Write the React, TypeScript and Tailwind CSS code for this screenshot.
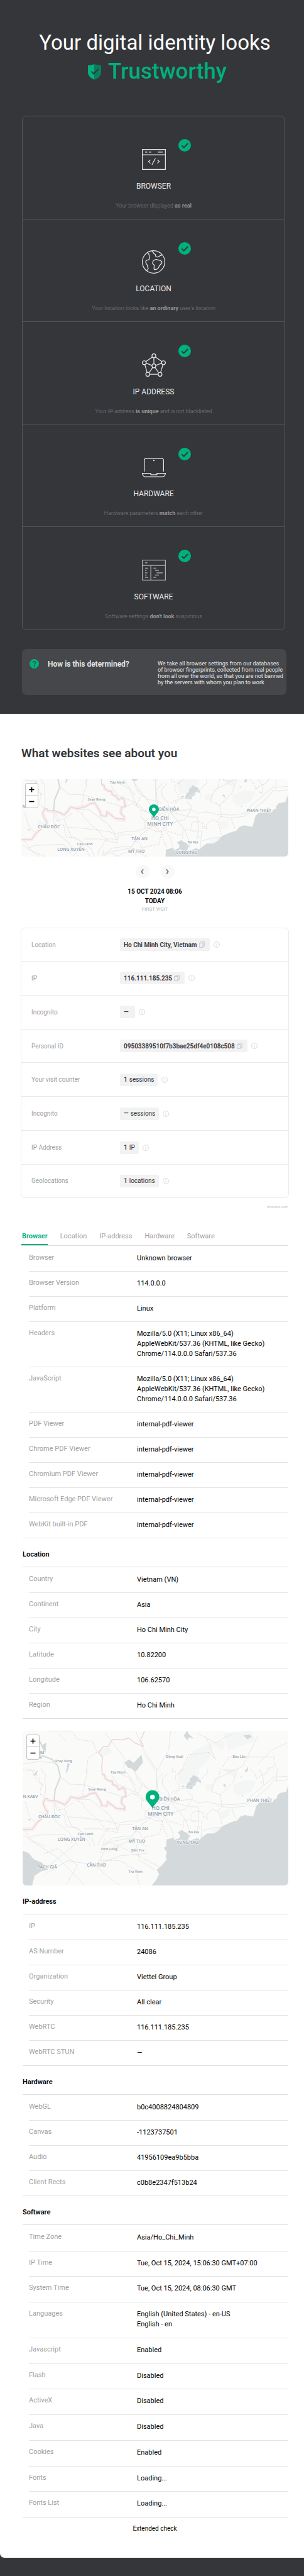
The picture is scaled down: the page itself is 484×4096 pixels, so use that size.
import React from "react";

const sans = "font-['Roboto','Liberation_Sans',sans-serif]";

/* ---------- status icons ---------- */

function BrowserIcon() {
  return (
    <svg viewBox="0 0 62 54" className="h-[33px] w-[38px]" fill="none" stroke="#e9e9ea" strokeWidth="2" aria-hidden="true">
      <rect x="1" y="1" width="60" height="52" />
      <path d="M1 15H61M8 8h6M18 8h6M41 8h13" />
      <path d="M22 28l-5 4.500 5 4.500M40 28l5 4.500-5 4.500M35 24l-9 17" />
    </svg>
  );
}

function GlobeIcon() {
  return (
    <svg viewBox="0 0 60 60" className="size-[37px]" fill="none" stroke="#e9e9ea" strokeWidth="2" strokeLinejoin="round" aria-hidden="true">
      <circle cx="30" cy="30" r="29" />
      <path d="M15 6c4 4 4 8 4 10 1 5 2 6-2 8-6 2-8 3-7 7 1 6 4 5 4 9 1 6 4 6 1 10-3 2-4 1-5 3" />
      <path d="M26 2c1 4 4 2 5 7 3 2 3 0 4 3 0 5 3 6 7 5 3-2 5-4 11-5" />
      <path d="M28 35c-2-7 4-12 11-11 3 2 6 1 9 3 5 1 4 5 2 8-3 2-5 3-6 7-2 5-5 7-8 7-5 2-5 0-5-3 1-6 2-8-3-11z" />
    </svg>
  );
}

function NetworkIcon() {
  return (
    <svg viewBox="0 0 62 60" className="h-[37px] w-[38px]" fill="none" stroke="#e9e9ea" strokeWidth="2" aria-hidden="true">
      <circle cx="31" cy="6" r="5" />
      <circle cx="6" cy="24" r="5" />
      <circle cx="56" cy="24" r="5" />
      <circle cx="15" cy="54" r="5" />
      <circle cx="47" cy="54" r="5" />
      <circle cx="31" cy="32" r="5" />
      <path d="M27 9L10 21M35 9l17 12M31 11v16M11 25l15 6M51 25l-15 6M7.500 29l6 20M54.500 29l-6 20M20 54h22M28 36L18.500 50M34 36l9.500 14" />
    </svg>
  );
}

function LaptopIcon() {
  return (
    <svg viewBox="0 0 62 50" className="h-[31px] w-[38px]" fill="none" stroke="#e9e9ea" strokeWidth="2" aria-hidden="true">
      <path d="M6 35V6q0-5 5-5H51q5 0 5 5V35" />
      <path d="M1 40H23v3.500H39V40H61q-1 9-10 9H11Q2 49 1 40z" />
      <circle cx="31" cy="6.500" r=".8" fill="#e9e9ea" />
    </svg>
  );
}

function SoftwareIcon() {
  return (
    <svg viewBox="0 0 62 54" className="h-[33px] w-[38px]" fill="none" stroke="#b3b3b5" strokeWidth="2" aria-hidden="true">
      <rect x="1" y="1" width="60" height="52" />
      <path d="M1 15H61M23 15V53M8 8h6M8 22h8M8 28h4M8 34h6M8 40h4M8 46h8M30 22h7M34 28h10M38 34h16M34 40h10M30 46h7" />
    </svg>
  );
}

function CheckBadge() {
  return (
    <svg viewBox="0 0 32 32" className="absolute top-9 left-1/2 ml-[39px] size-5" aria-hidden="true">
      <circle cx="16" cy="16" r="16" fill="#00b07d" />
      <path d="M9.500 17.500l4.500 4.300 9.500-9.800" fill="none" stroke="#35363a" strokeWidth="3.200" strokeLinecap="round" strokeLinejoin="round" />
    </svg>
  );
}

function ShieldIcon() {
  return (
    <svg viewBox="0 0 34 40" className="h-[25px] w-[21px]" aria-hidden="true">
      <path d="M17 0L0 3v17c0 10 7 16 17 20z" fill="#00b07d" />
      <path d="M17 0l17 3v17c0 10-7 16-17 20z" fill="#087f5d" />
      <path d="M10 19.500l5 5L26 13" fill="none" stroke="#35363a" strokeWidth="3.400" strokeLinecap="round" />
    </svg>
  );
}

const checks = [
  { title: "BROWSER", box: "h-[38px]", icon: <BrowserIcon />, text: ["Your browser displayed ", "as real", ""] },
  { title: "LOCATION", box: "h-[37px]", icon: <GlobeIcon />, text: ["Your location looks like ", "an ordinary", " user's location"] },
  { title: "IP ADDRESS", box: "h-[38px]", icon: <NetworkIcon />, text: ["Your IP-address ", "is unique", " and is not blacklisted"] },
  { title: "HARDWARE", box: "h-[36px]", icon: <LaptopIcon />, text: ["Hardware parameters ", "match", " each other"] },
  { title: "SOFTWARE", box: "h-[38px]", icon: <SoftwareIcon />, text: ["Software settings ", "don't look", " suspicious"] },
];

/* ---------- map ---------- */

type Label = [string, number, number, number];

const places: Label[] = [
  ["PHNOM", 35, -39, 12],
  ["PENH", 35, -26, 12],
  ["Prey Veng", 108, -18, 9],
  ["Đồng Xoài", 394, -28, 9],
  ["Bảo Lộc", 560, -29, 9],
  ["Tây Ninh", 248, 12, 9],
  ["Svay Rieng", 194, 56, 9],
  ["N KAEV", 22, 75, 11],
  ["CHÂU ĐỐC", 71, 127, 11],
  ["Cao Lãnh", 164, 170, 9],
  ["LONG XUYÊN", 128, 185, 11],
  ["TÂN AN", 305, 158, 11],
  ["MỸ THO", 297, 190, 11],
  ["BIÊN HÒA", 381, 81, 11],
  ["HO CHI", 358, 106, 13],
  ["MINH CITY", 358, 120, 13],
  ["PHAN THIẾT", 613, 85, 11],
  ["Bà Rịa", 443, 165, 9],
  ["VŨNG TÀU", 427, 193, 11],
  ["Vĩnh Long", 225, 210, 9],
  ["Bến Tre", 299, 212, 9],
  ["RẠCH GIÁ", 65, 256, 11],
  ["CẦN THƠ", 192, 252, 11],
  ["Trà Vinh", 293, 268, 9],
];

const west = "translate(-5 -9) scale(.3333)";
const east = "translate(345 -9) scale(.3333)";
const full = "matrix(.5006 0 0 .6059 -57 -612.3)";

function Lines({ d, transform }: { d: string; transform: string }) {
  return <path d={d} transform={transform} vectorEffect="non-scaling-stroke" />;
}

type MapProps = { left: number; top: number; width: number; tall: number; height: string; pin: string; name: string };

function MapView({ left, top, width, tall, height, pin, name }: MapProps) {
  const visible = places.filter(([, , y, size]) => y - size >= top - 1 && y < top + tall - 4);
  return (
    <div className={`relative overflow-hidden rounded-md bg-[#fafaf8] ${height}`}>
      <svg viewBox={`${left} ${top} ${width} ${tall}`} preserveAspectRatio="xMidYMid slice" className="block size-full" role="img" aria-label={name}>
        <g fill="#f3f6f4">
          <path transform={east} d="M165 60L215 30 330 20 340 60 240 150 190 140zM600 150L700 110 780 125 740 200 700 215 640 235 595 190zM385 150L450 140 440 190 390 195zM490 360L560 345 570 390 510 420zM520 30L640 30 620 90 560 70zM430 490L520 475 480 510 440 520z" />
          <path transform={full} d="M940 1005L1000 930 1100 900 1080 970 1000 1030zM1150 860L1290 850 1320 890 1180 930zM1080 900L1160 890 1150 930zM505 935L560 915 580 940 520 960zM200 1190L235 1190 232 1220 205 1220z" />
        </g>
        <g fill="#d4dadc">
          <path d="M690 39L685 48 681 59 665 62 658 69 657 76 650 79 647 86 635 85 612 87 604 96 600 111 597 121 594 123 575 119 563 123 555 133 538 138 517 147 507 159 495 166 478 166 467 174 458 182 452 178 438 183 427 184 433 173 425 164 417 161 413 157 402 163 408 171 407 178 393 183 391 177 373 182 372 200 366 203 374 215 371 227 374 233 361 248 348 260 354 272 346 287 333 302H692z" />
          <path d="M0 210L18 217 31 233 51 241 68 260 51 263 33 275 26 302H0z" />
          <path transform={east} d="M240 150L250 132 262 130 265 100 280 92 290 72 300 80 308 84 330 90 332 102 350 120 355 178 349 135 325 125 312 132 310 150 285 165 285 185 245 180 232 172zM195 168L215 153 228 165 205 170zM518 155L535 142 546 175 530 160zM690 35L712 30 705 50 695 55zM652 95L668 78 662 96zM390 405L403 385 397 400 405 420zM288 428L296 435 304 432 297 440zM555 336L575 346 570 348zM810 122L828 130 815 135zM664 236L678 228 672 245zM335 478L345 468 341 480z" />
          <path transform={full} d="M642 985L665 970 690 985 730 950 738 985 720 1000 710 1015 695 1022 680 1010 660 1005zM948 870L965 848 972 862 1002 882 975 876 966 890zM1255 868L1290 866 1298 874 1275 885zM1262 1020L1280 1000 1276 1022zM215 910L240 900 236 940 222 925zM170 1040L195 1015 190 1035zM340 1030L350 985 360 990 350 1020zM145 1222L165 1228 150 1230z" />
        </g>
        <g fill="none" stroke="#d4dadc" strokeWidth="2" strokeLinejoin="round">
          <Lines transform={full} d="M205 950L270 970 300 1000 312 1045 285 1100 280 1145" />
          <Lines transform={full} d="M190 870L210 900 230 935" />
        </g>
        <g fill="none" stroke="#e5e7e8" strokeWidth="1" strokeLinejoin="round">
          <Lines transform={west} d="M165 26L180 55 198 70 193 120 200 190 190 260M262 300L275 430 330 475 380 520 450 620M345 335L365 390 400 470 470 505 560 570 580 626M375 397L520 410 700 435 735 450 760 520M735 450L840 430 900 432 1000 400M440 262L545 265 600 310 690 380 740 450M310 85L385 145 500 150 660 200 780 235M710 80L760 150 810 170 900 210 1000 290 1070 340M770 60L850 100 880 160 900 210M890 60L960 150 1000 200 1060 330M1110 60L1060 110 1075 300M650 610L720 560 800 550 870 545 920 480 1000 410 1080 360M645 600L720 600 760 626M650 625L700 590 860 560 900 500M40 280L60 350 80 400 120 440M70 560L120 540 340 530 400 600M495 490L620 490 760 520M945 260L940 320 1000 380 1080 410M270 300L290 350 340 335 410 290" />
          <Lines transform={east} d="M1036 82L910 92 830 160 740 235 700 290 600 305 480 300 400 280 330 290 280 262 110 280M1036 108L960 120 915 115 850 190 750 270 690 315 580 328 480 310M5 26L5 200 25 240 30 300M95 60L50 110 55 160 100 210 115 280 160 330 230 420 260 500 270 560M400 26L400 60 355 100 240 180 200 175 150 215M115 280L270 320 330 320 335 420 320 520M245 200L285 240 280 262M620 60L600 130 530 200 490 240M590 330L605 380 620 410M270 425L360 430 350 570M365 505L450 480 510 478M110 290L60 400 120 480 145 570M800 26L830 80 835 150M940 26L935 120M30 340L110 380 180 350 230 340 280 262M0 330L40 300 110 270M20 360L80 300" />
          <Lines transform={full} d="M545 860L600 920 640 960 640 1010 700 1080M700 850L740 930 805 1010 808 1080M880 850L870 930 810 1020M300 860L340 890M240 1430L390 1330M500 1420L540 1360 690 1310M490 1420L560 1470 620 1507M118 1290L300 1390 440 1507M1100 1060L1250 1000 1330 870M118 990L200 980 300 985M170 970L180 870M1330 990L1400 930 1480 900M230 1460L350 1400 490 1420 620 1380 760 1370M700 1320L720 1400 800 1440M1020 860L1110 900 1200 860" />
        </g>
        <g fill="none" stroke="#f7eeee" strokeWidth="5" strokeLinejoin="round">
          <Lines transform={west} d="M636 68L655 75 660 100 690 120 715 122 717 145 750 160 765 188 800 170 812 190 820 240 790 245 785 290 812 320 810 345 745 332 678 280 672 315 632 310 628 285 585 212 545 218 510 240 430 252 395 243 345 305 315 288 220 272 195 258 180 292 212 355 213 380M170 410L135 440 95 493 0 495" />
        </g>
        <g fill="none" stroke="#ecd5d8" strokeWidth="1.500" strokeLinejoin="round">
          <Lines transform={west} d="M636 68L655 75 660 100 690 120 715 122 717 145 750 160 765 188 800 170 812 190 820 240 790 245 785 290 812 320 810 345 800 333 745 332 710 305 678 280 672 315 632 310 628 285 585 212 545 218 510 240 455 255 430 252 395 243 375 280 345 305 315 288 275 270 220 272 215 255 195 258 180 292 192 335 212 355 213 380M170 410L135 440 95 493 0 495" />
          <Lines transform={full} d="M745 850L725 890 740 915 695 900 665 880 630 887 580 885 560 915 535 915 508 940 530 960 525 1000 528 1034" />
        </g>
        <g fill="none" stroke="#ecced1" strokeWidth="1" strokeDasharray="2 2" strokeLinejoin="round">
          <Lines transform={west} d="M518 26L520 80 498 130 500 160 480 225 505 240M60 40L115 35 120 70 150 100 150 130 175 140 155 200 160 230 180 235 180 262M440 268L487 295 500 325 560 385 615 430 650 480 675 490 640 545 610 590 608 626M675 488L762 492 765 460 865 458 890 485M262 275L300 330 320 380 345 385 350 430 365 475 440 480 465 500 500 560 525 580 545 626M820 240L875 215 905 232 945 150 905 105 890 50M945 150L1000 185 1110 210M905 232L935 260 1000 290M1000 330L965 365 970 395 1015 412 1060 430 1110 430M890 510L925 515 950 560 990 550 1080 530 1100 445M940 570L930 600 985 626M40 505L90 580 200 626" />
          <Lines transform={east} d="M222 26L180 60 155 75 155 110 182 150 180 180 120 210M500 26L490 85 445 150 430 200 500 225 515 320 480 355 445 340 400 375 370 410 370 365 315 352 280 370 280 415 215 425 215 490M480 355L500 400 515 465M525 30L570 45 600 30M735 30L765 60 780 105 800 85 850 65 885 26M0 430L50 425 65 500 95 560M130 26L130 50 165 45M65 380L100 430 200 460" />
          <Lines transform={full} d="M250 850L370 850 400 885 480 895 500 940 455 965 445 1030M118 1015L165 1015 185 1050 215 1080M745 950L780 990 800 1020M925 1030L975 950 1080 940 1110 970 1060 870M1150 1000L1180 960 1290 960 1410 960 1420 1000 1370 1010M520 1400L620 1400 700 1440 720 1507M230 1370L300 1350 400 1420 340 1507M560 1360L620 1340 760 1400 850 1440M540 1310L520 1370" />
        </g>
        <g fill="#8d9eb0" stroke="#fafaf8" strokeWidth="2" paintOrder="stroke" textAnchor="middle" className="font-['Open_Sans','Noto_Sans',sans-serif] font-semibold">
          {visible.map(([text, x, y, size]) => (
            <text key={text} x={x} y={y} fontSize={size}>
              {text}
            </text>
          ))}
        </g>
        <g transform={pin}>
          <path d="M13 34C9 26 0 20 0 13a13 13 0 0126 0c0 7-9 13-13 21z" fill="#00b07d" />
          <circle cx="13" cy="13" r="4.500" fill="#fff" />
        </g>
      </svg>
      <div className="absolute top-[6px] left-[6px] flex w-[21px] flex-col overflow-hidden rounded-[3px] border border-[#c3c4c4] bg-white">
        <button type="button" aria-label="Zoom in" className="flex h-[19px] items-center justify-center border-b border-[#ccc]">
          <svg viewBox="0 0 9 9" className="size-[9px]" stroke="#000" strokeWidth="1.600"><path d="M4.500 .5v8M.5 4.500h8" /></svg>
        </button>
        <button type="button" aria-label="Zoom out" className="flex h-[19px] items-center justify-center">
          <svg viewBox="0 0 9 9" className="size-[9px]" stroke="#000" strokeWidth="1.600"><path d="M.5 4.500h8" /></svg>
        </button>
      </div>
    </div>
  );
}

/* ---------- visit summary ---------- */

const visit = [
  { label: "Location", strong: "Ho Chi Minh City, Vietnam", unit: "", copy: true },
  { label: "IP", strong: "116.111.185.235", unit: "", copy: true },
  { label: "Incognito", strong: "—", unit: " ", copy: false },
  { label: "Personal ID", strong: "09503389510f7b3bae25df4e0108c508", unit: "", copy: true },
  { label: "Your visit counter", strong: "1", unit: "sessions", copy: false },
  { label: "Incognito", strong: "—", unit: "sessions", copy: false },
  { label: "IP Address", strong: "1", unit: "IP", copy: false },
  { label: "Geolocations", strong: "1", unit: "locations", copy: false },
];

function VisitTable() {
  return (
    <div className="-mx-px mt-[23px] rounded-[7px] border border-[#ebebeb]">
      <table className="h-[428px] w-full text-[10px] leading-[19px]">
        <tbody>
          {visit.map((row, i) => (
            <tr key={i} className={i < visit.length - 1 ? "border-b border-[#ebebeb]" : ""}>
              <th scope="row" className="w-[157px] pl-4 text-left font-normal text-[#a0a0a0]">{row.label}</th>
              <td>
                <div className="flex items-center gap-[6px]">
                  <span className="flex h-5 items-center gap-[3px] rounded-[2px] bg-[#f2f2f2] px-[6px] text-[#36363b]">
                    <b className="font-semibold">{row.strong}</b>
                    {row.unit && <span className="min-w-px">{row.unit}</span>}
                    {row.copy && (
                      <button type="button" aria-label="Copy" className="mr-[2px]">
                        <svg viewBox="0 0 14 16" className="h-[10px] w-[9px]" fill="none" stroke="#c4c4cc" strokeWidth="1.600">
                          <path d="M4.500 4V1H13v11h-3" />
                          <rect x="1" y="4" width="8.500" height="11" />
                        </svg>
                      </button>
                    )}
                  </span>
                  <svg viewBox="0 0 16 16" className="size-[10px]" fill="none" stroke="#d0d0d5" strokeWidth="1.300" aria-hidden="true">
                    <circle cx="8" cy="8" r="7.200" />
                    <path d="M8 7v5M8 4v1.600" />
                  </svg>
                </div>
              </td>
            </tr>
          ))}
        </tbody>
      </table>
    </div>
  );
}

/* ---------- detail tables ---------- */

type Row = [string, string[]];

const agent = ["Mozilla/5.0 (X11; Linux x86_64)", "AppleWebKit/537.36 (KHTML, like Gecko)", "Chrome/114.0.0.0 Safari/537.36"];

const browserRows: Row[] = [
  ["Browser", ["Unknown browser"]],
  ["Browser Version", ["114.0.0.0"]],
  ["Platform", ["Linux"]],
  ["Headers", agent],
  ["JavaScript", agent],
  ["PDF Viewer", ["internal-pdf-viewer"]],
  ["Chrome PDF Viewer", ["internal-pdf-viewer"]],
  ["Chromium PDF Viewer", ["internal-pdf-viewer"]],
  ["Microsoft Edge PDF Viewer", ["internal-pdf-viewer"]],
  ["WebKit built-in PDF", ["internal-pdf-viewer"]],
];

const locationRows: Row[] = [
  ["Country", ["Vietnam (VN)"]],
  ["Continent", ["Asia"]],
  ["City", ["Ho Chi Minh City"]],
  ["Latitude", ["10.82200"]],
  ["Longitude", ["106.62570"]],
  ["Region", ["Ho Chi Minh"]],
];

const ipRows: Row[] = [
  ["IP", ["116.111.185.235"]],
  ["AS Number", ["24086"]],
  ["Organization", ["Viettel Group"]],
  ["Security", ["All clear"]],
  ["WebRTC", ["116.111.185.235"]],
  ["WebRTC STUN", ["—"]],
];

const hardwareRows: Row[] = [
  ["WebGL", ["b0c4008824804809"]],
  ["Canvas", ["-1123737501"]],
  ["Audio", ["41956109ea9b5bba"]],
  ["Client Rects", ["c0b8e2347f513b24"]],
];

const softwareRows: Row[] = [
  ["Time Zone", ["Asia/Ho_Chi_Minh"]],
  ["IP Time", ["Tue, Oct 15, 2024, 15:06:30 GMT+07:00"]],
  ["System Time", ["Tue, Oct 15, 2024, 08:06:30 GMT"]],
  ["Languages", ["English (United States) - en-US", "English - en"]],
  ["Javascript", ["Enabled"]],
  ["Flash", ["Disabled"]],
  ["ActiveX", ["Disabled"]],
  ["Java", ["Disabled"]],
  ["Cookies", ["Enabled"]],
  ["Fonts", ["Loading..."]],
  ["Fonts List", ["Loading..."]],
];

function Details({ title, rows, height = "" }: { title?: string; rows: Row[]; height?: string }) {
  return (
    <section className="ml-[2px] text-[11px] leading-4">
      {title && <h3 className="border-b border-[#dedede] pt-[18px] pb-[11px] font-semibold text-black">{title}</h3>}
      <div className="border-b border-[#dedede] pt-px pl-[10px]">
        <table className={`w-full ${height}`}>
          <tbody>
            {rows.map(([label, lines], i) => (
              <tr key={label} className={i < rows.length - 1 ? "border-b border-[#e4e4e4]" : ""}>
                <th scope="row" className="w-[172px] pt-[10px] pb-[13px] text-left align-top font-normal text-[#a0a0a0]">{label}</th>
                <td className="pt-[11px] pb-3 align-top text-black">
                  {lines.map((line) => (
                    <div key={line}>{line}</div>
                  ))}
                </td>
              </tr>
            ))}
          </tbody>
        </table>
      </div>
    </section>
  );
}

const tabs = ["Browser", "Location", "IP-address", "Hardware", "Software"];

export default function App() {
  return (
    <div className={`bg-[#35363a] pb-[31px] ${sans}`}>
      <header className="pt-[45px] pr-[30px] pb-[30px] pl-[35px]">
        <h1 className="-mr-1 text-center text-[33px] leading-[46px] whitespace-nowrap text-white">
          Your digital identity looks
          <span className="flex items-center justify-center gap-[11px] pl-2 text-[35px] font-medium text-[#00b07d]">
            <ShieldIcon />
            Trustworthy
          </span>
        </h1>

        <ul className="mt-[47px] rounded-[7px] border border-[#55565a]">
          {checks.map((c, i) => (
            <li
              key={c.title}
              className={`relative flex flex-col items-center pt-[49px] pb-[15px] ${i < checks.length - 1 ? "border-b border-[#55565a]" : ""}`}
            >
              <div className={`flex items-center ${c.box}`}>{c.icon}</div>
              <CheckBadge />
              <h2 className="mt-4 text-[12px] leading-4 text-[#e9e9ea]">{c.title}</h2>
              <p className="mt-[17px] text-[9px] leading-3 font-light text-[#7e7e80]">
                {c.text[0]}
                <b className="font-bold text-[#939395]">{c.text[1]}</b>
                {c.text[2]}
              </p>
            </li>
          ))}
        </ul>

        <section className="mt-[30px] -mr-[2px] flex items-start rounded-[7px] bg-[#46474a] pb-[15px] pl-3 text-[#e9e9ea]">
          <svg viewBox="0 0 24 24" className="mt-4 size-[15px]" aria-hidden="true">
            <circle cx="12" cy="12" r="12" fill="#00b07d" />
            <path d="M8.500 9c.2-4.500 7.500-4 6.800.3-.4 2-3 2.200-3 4.700" fill="none" stroke="#46474a" strokeWidth="2.200" />
            <circle cx="12.200" cy="17.500" r="1.500" fill="#46474a" />
          </svg>
          <h2 className="mt-[18px] ml-[14px] w-[175px] text-[12px] leading-3 font-semibold">How is this determined?</h2>
          <p className="mt-[18px] text-[9px] leading-[10px] whitespace-nowrap">
            We take all browser settings from our databases
            <br />
            of browser fingerprints, collected from real people
            <br />
            from all over the world, so that you are not banned
            <br />
            by the servers with whom you plan to work
          </p>
        </section>
      </header>

      <main className="rounded-bl-[7px] bg-white pt-[51px] pr-[25px] pb-[39px] pl-[34px]">
        <h2 className="text-[19px] leading-6 font-semibold text-[#35363a]">What websites see about you</h2>
        <div className="mt-[29px]">
          <MapView left={0} top={0} width={689} tall={200} height="h-[123px]" pin="translate(329 65)" name="Visit map" />
        </div>

        <div className="mt-[13px] flex justify-center gap-[18px]">
          <button type="button" aria-label="Previous visit" className="flex size-[22px] items-center justify-center rounded-full bg-[#f8f8f8]">
            <svg viewBox="0 0 8 14" className="h-2 w-[5px]" fill="#7d7d7d"><path d="M5 0h3L4 7l4 7H5L0 7z" /></svg>
          </button>
          <button type="button" aria-label="Next visit" className="flex size-[22px] items-center justify-center rounded-full bg-[#f8f8f8]">
            <svg viewBox="0 0 8 14" className="h-2 w-[5px]" fill="#7d7d7d"><path d="M3 0H0l4 7-4 7h3l5-7z" /></svg>
          </button>
        </div>
        <div className="mt-[13px] text-center text-[10px] leading-[15px] font-semibold text-black">
          <div>15 OCT 2024 08:06</div>
          <div>TODAY</div>
          <div className="text-[8px] leading-3 font-normal text-[#b0b0b0]">FIRST VISIT</div>
        </div>

        <VisitTable />
        <div className="mt-[9px] text-right text-[6px] leading-[10px] text-[#c4c4cc]">
          <a href="#mixvisit">mixvisit.com</a>
        </div>

        <nav className="mt-[34px] flex gap-5 border-b border-[#dedede] text-[11px] leading-4 text-[#a0a0a0]">
          {tabs.map((tab, i) => (
            <a
              key={tab}
              href={`#${tab.toLowerCase()}`}
              className={i === 0 ? "border-b-2 border-[#00b07d] pb-1 pl-px font-semibold text-[#00b07d]" : "border-b-2 border-transparent pb-1"}
            >
              {tab}
            </a>
          ))}
        </nav>

        <Details rows={browserRows} />
        <Details title="Location" rows={locationRows} />
        <div className="mt-[19px] ml-[2px]">
          <MapView left={2} top={-98.5} width={685} tall={399} height="h-[246px]" pin="translate(319 55) scale(1.37)" name="Location map" />
        </div>
        <Details title="IP-address" rows={ipRows} />
        <Details title="Hardware" rows={hardwareRows} />
        <Details title="Software" rows={softwareRows} height="h-[463px]" />

        <div className="mt-[11px] flex justify-center text-[10px] leading-[14px] text-black">
          <button type="button">Extended check</button>
        </div>
      </main>
    </div>
  );
}
